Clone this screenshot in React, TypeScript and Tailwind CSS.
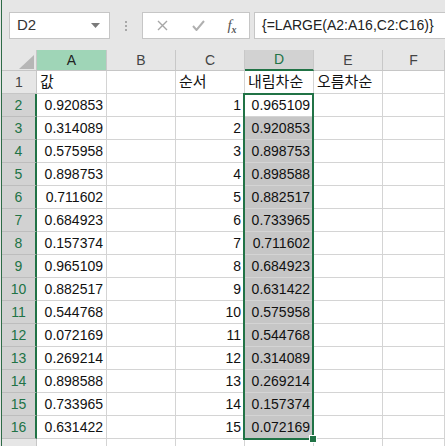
const colA = [
  "0.920853", "0.314089", "0.575958", "0.898753", "0.711602",
  "0.684923", "0.157374", "0.965109", "0.882517", "0.544768",
  "0.072169", "0.269214", "0.898588", "0.733965", "0.631422",
];

const colD = [
  "0.965109", "0.920853", "0.898753", "0.898588", "0.882517",
  "0.733965", "0.711602", "0.684923", "0.631422", "0.575958",
  "0.544768", "0.314089", "0.269214", "0.157374", "0.072169",
];

const font = { fontFamily: '"Liberation Sans", "Noto Sans CJK KR", sans-serif' };

function Cell({
  children,
  right,
  shade,
  big,
}: {
  children?: React.ReactNode;
  right?: boolean;
  shade?: boolean;
  big?: boolean;
}) {
  return (
    <div
      className={`h-[23px] border-r border-b border-[#d4d4d4] flex items-center overflow-hidden whitespace-nowrap text-[#111] ${
        big ? "text-[15px]" : "text-[14px]"
      } ${right ? "justify-end pr-[3px]" : "pl-[3px]"} ${
        shade ? "bg-[#c6c6c6]" : "bg-white"
      }`}
    >
      {children}
    </div>
  );
}

function ColHead({ label, tone }: { label: string; tone?: "green" | "sel" }) {
  const bg =
    tone === "green"
      ? "bg-[#9fd5b7] text-[#222] border-b-[#c6c6c6]"
      : tone === "sel"
      ? "bg-[#d2d2d2] text-[#217346] border-b-2 border-b-[#217346]"
      : "bg-[#e6e6e6] text-[#444] border-b-[#c6c6c6]";
  return (
    <div
      className={`h-[21px] border-r border-b border-r-[#c8c8c8] flex items-center justify-center text-[14px] ${bg}`}
    >
      {label}
    </div>
  );
}

function RowHead({ n, sel }: { n?: number; sel?: boolean }) {
  return (
    <div
      className={`h-[23px] border-b flex items-center justify-center text-[14px] ${
        sel
          ? "bg-[#d2d2d2] text-[#217346] border-b-[#bdbdbd] border-r-2 border-r-[#217346]"
          : "bg-[#e6e6e6] text-[#444] border-b-[#c6c6c6] border-r border-r-[#c6c6c6]"
      }`}
    >
      {n}
    </div>
  );
}

export default function App() {
  return (
    <div
      className="w-[445px] h-[446px] overflow-hidden bg-[#e6e6e6] pl-px flex"
      style={font}
    >
      <div className="flex-1 flex flex-col border-l border-[#2e6b47] min-w-0">
        {/* formula bar */}
        <div className="h-[50px] shrink-0 flex items-start pt-[12px] pl-[7px]">
          <div className="w-[101px] h-[27px] bg-white border border-[#c6c6c6] flex items-center pl-[7px] pr-[9px] text-[15px] text-[#333]">
            <span className="flex-1">D2</span>
            <svg width="9" height="5" viewBox="0 0 9 5">
              <path d="M0 0h9L4.5 5z" fill="#7a7a7a" />
            </svg>
          </div>
          <div className="w-[32px] h-[27px] flex flex-col items-center justify-center gap-[2px]">
            <span className="w-[2px] h-[2px] bg-[#a8a8a8]" />
            <span className="w-[2px] h-[2px] bg-[#a8a8a8]" />
            <span className="w-[2px] h-[2px] bg-[#a8a8a8]" />
          </div>
          <div className="w-[108px] h-[27px] bg-white border border-[#c6c6c6] flex items-center">
            <div className="w-[36px] flex justify-center pl-[2px]">
              <svg width="11" height="11" viewBox="0 0 11 11">
                <path d="M1 1l9 9M10 1l-9 9" stroke="#a6a6a6" strokeWidth="1.4" />
              </svg>
            </div>
            <div className="w-[38px] flex justify-center">
              <svg width="13" height="11" viewBox="0 0 13 11">
                <path d="M1 6l3.5 4L12 1" stroke="#b0b0b0" strokeWidth="2" fill="none" />
              </svg>
            </div>
            <div
              className="flex-1 flex justify-center italic text-[15px] text-[#555] pr-[2px]"
              style={{ fontFamily: '"Liberation Serif", serif' }}
            >
              f<span className="text-[10px] self-end font-bold">x</span>
            </div>
          </div>
          <div className="flex-1 ml-[4px] h-[27px] bg-white border-y border-l border-[#c6c6c6] flex items-center pl-[7px] text-[14px] text-[#222] whitespace-nowrap overflow-hidden">
            {"{=LARGE(A2:A16,C2:C16)}"}
          </div>
        </div>

        {/* sheet grid */}
        <div className="relative grid grid-cols-[35px_70px_69px_69px_69px_69px_1fr] bg-white">
          <div className="h-[21px] bg-[#e6e6e6] border-r border-b border-[#c6c6c6] flex items-end justify-end pr-[2px] pb-[1px]">
            <svg width="15" height="14" viewBox="0 0 15 14">
              <path d="M15 0v14H0z" fill="#b6b6b6" />
            </svg>
          </div>
          <ColHead label="A" tone="green" />
          <ColHead label="B" />
          <ColHead label="C" />
          <ColHead label="D" tone="sel" />
          <ColHead label="E" />
          <ColHead label="F" />

          <RowHead n={1} />
          <Cell big>값</Cell>
          <Cell />
          <Cell big>순서</Cell>
          <Cell big>내림차순</Cell>
          <Cell big>오름차순</Cell>
          <Cell />

          {colA.map((a, i) => (
            <div key={i} className="contents">
              <RowHead n={i + 2} sel />
              <Cell right>{a}</Cell>
              <Cell />
              <Cell right>{i + 1}</Cell>
              <Cell right shade={i > 0}>
                {colD[i]}
              </Cell>
              <Cell />
              <Cell />
            </div>
          ))}

          <RowHead />
          <Cell />
          <Cell />
          <Cell />
          <Cell />
          <Cell />
          <Cell />

          {/* selection outline D2:D16 */}
          <div className="absolute left-[241px] top-[43px] w-[71px] h-[347px] border-2 border-[#217346] pointer-events-none">
            <div className="absolute right-[-5px] bottom-[-5px] w-[8px] h-[8px] bg-[#217346] border border-white" />
          </div>
        </div>
      </div>
    </div>
  );
}
